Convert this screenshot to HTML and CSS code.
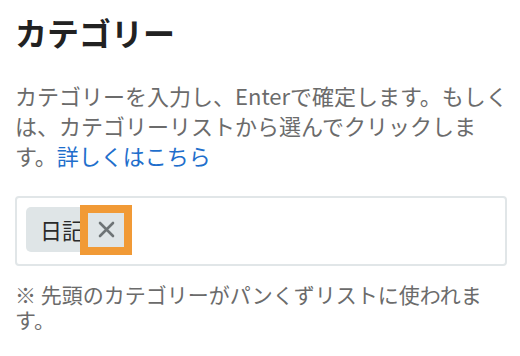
FILE: index.html
```html
<!DOCTYPE html>
<html lang="ja">
<head>
    <meta charset="UTF-8">
    <title>カテゴリー</title>
    <link rel="stylesheet" href="styles.css">
</head>
<body>
    <div class="category-panel">
        <h1 class="panel-title">カテゴリー</h1>

        <p class="panel-help">カテゴリーを入力し、Enterで確定します。もしくは、カテゴリーリストから選んでクリックします。<a href="#" class="help-link">詳しくはこちら</a></p>

        <div class="tag-input">
            <span class="tag-chip">
                <span class="tag-label">日記</span>
                <button class="tag-remove" aria-label="削除">
                    <svg width="17" height="17" viewBox="0 0 17 17">
                        <path d="M2 2 L15 15 M15 2 L2 15" stroke="#6e7476" stroke-width="2.6" stroke-linecap="round" fill="none"/>
                    </svg>
                </button>
            </span>
        </div>

        <p class="panel-note">※ 先頭のカテゴリーがパンくずリストに使われます。</p>
    </div>
</body>
</html>
```

FILE: styles.css
```css
body {
    margin: 0;
    background-color: #ffffff;
    font-family: "Noto Sans CJK JP", "Noto Sans", sans-serif;
    text-spacing-trim: space-all;
}
.category-panel {
    padding: 10px 10px 0 15px;
}
.panel-title {
    margin: 0;
    font-size: 32px;
    line-height: 44px;
    font-weight: 700;
    color: #222222;
}
.panel-help {
    margin: 26px 0 0 0;
    font-size: 22px;
    line-height: 30px;
    color: #6b6b6b;
}
.help-link {
    color: #1f6fcc;
    text-decoration: none;
}
.tag-input {
    margin: 26px 3px 0 0;
    border: 2px solid #e1e6e8;
    border-radius: 4px;
    padding: 9px 9px 12px 9px;
}
.tag-chip {
    display: inline-flex;
    align-items: center;
    height: 45px;
    padding: 0 4px 0 14px;
    background-color: #dfe5e7;
    border-radius: 5px;
    vertical-align: top;
}
.tag-label {
    font-size: 22px;
    color: #2a2a2a;
    line-height: 45px;
}
.tag-remove {
    display: flex;
    align-items: center;
    justify-content: center;
    width: 36px;
    height: 34px;
    margin-left: 4px;
    padding: 0;
    border: none;
    background-color: #dfe5e7;
    outline: 8px solid #f19a36;
    cursor: pointer;
}
.panel-note {
    margin: 16px 0 0 0;
    font-size: 21px;
    line-height: 25px;
    color: #6b6b6b;
}
```
